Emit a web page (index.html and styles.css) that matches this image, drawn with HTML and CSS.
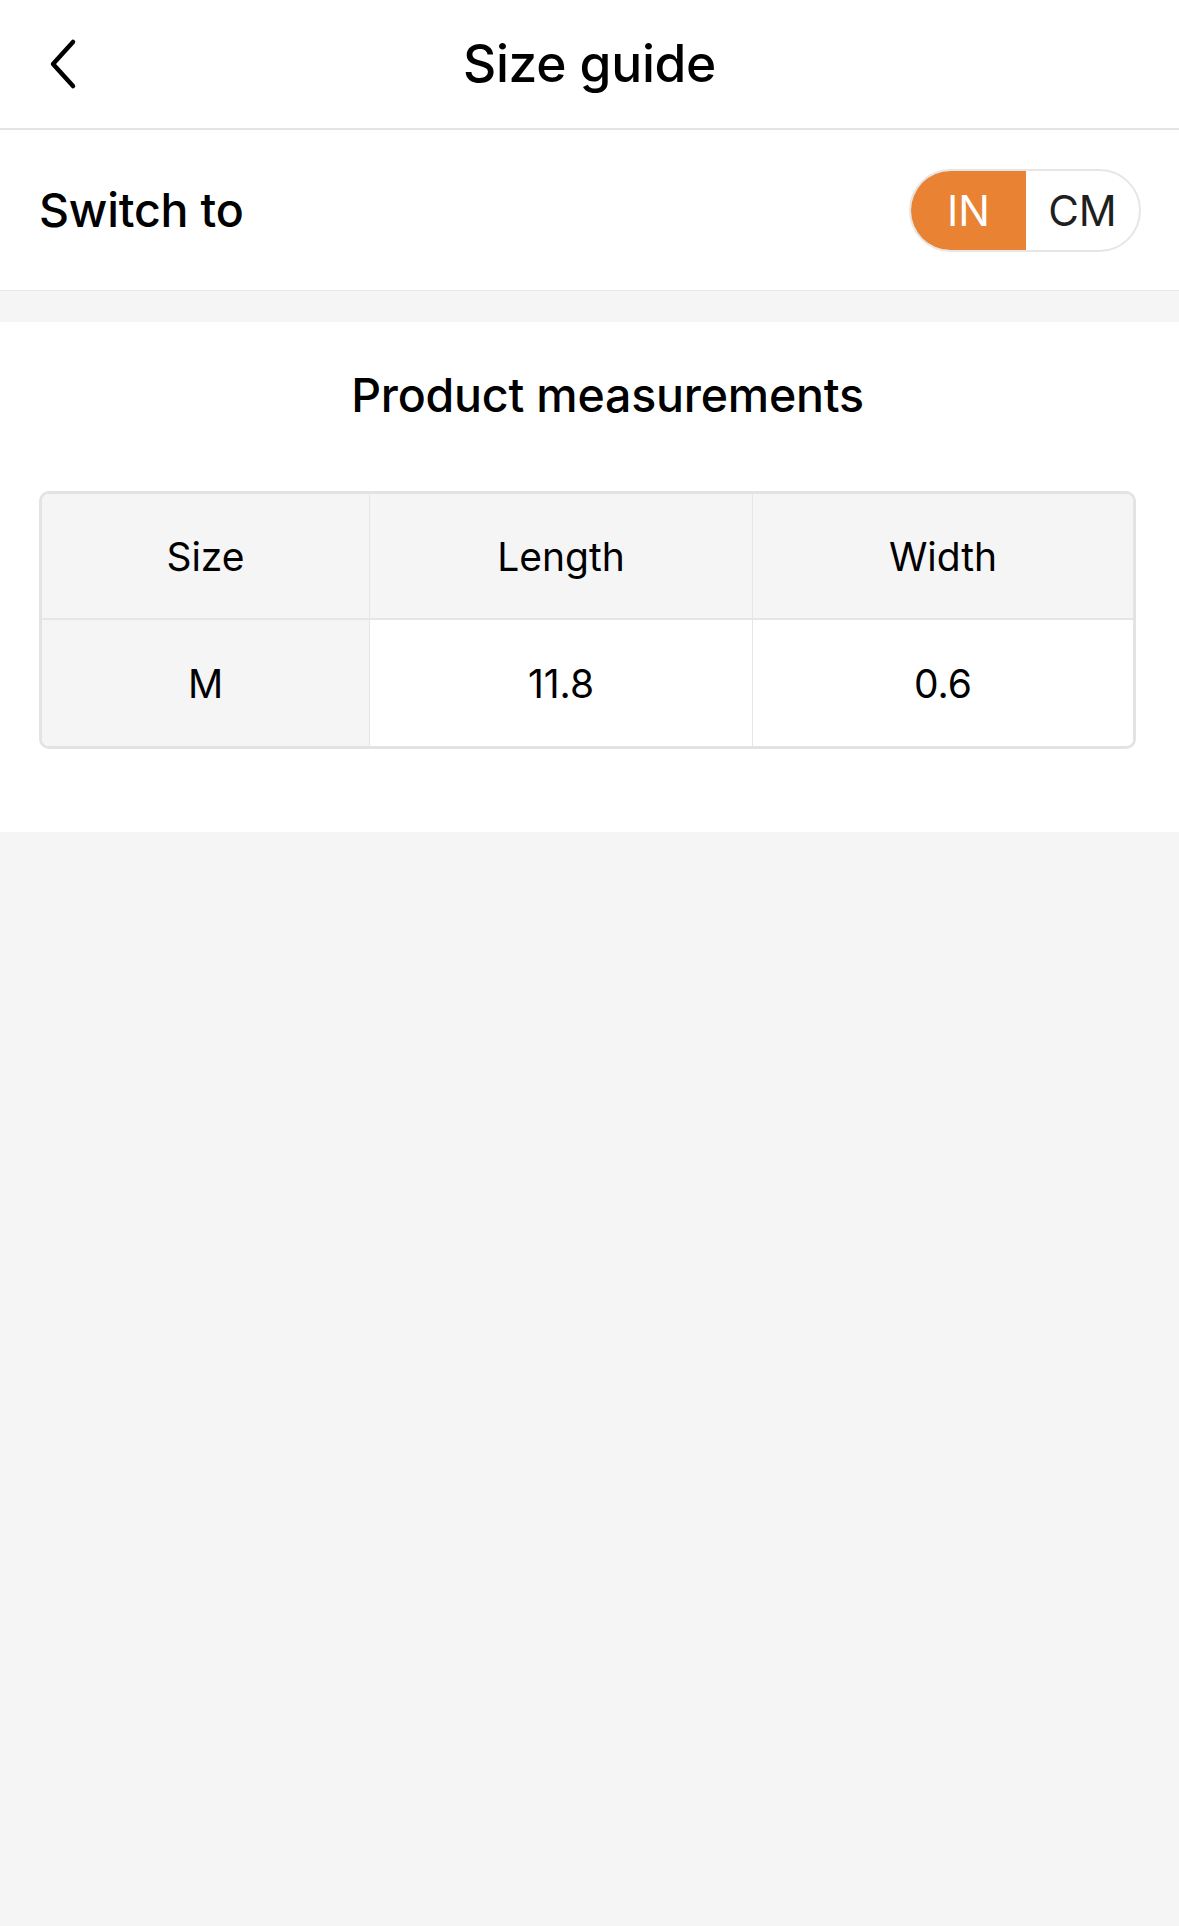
FILE: index.html
```html
<!DOCTYPE html>
<html>
<head>
<meta charset="utf-8">
<link rel="stylesheet" href="styles.css">
</head>
<body>
<div class="page">
  <header class="nav">
    <button class="back" aria-label="Back">
      <svg width="30" height="52" viewBox="0 0 30 52"><path d="M25 4 L5 26 L25 48" fill="none" stroke="#000" stroke-width="4.5" stroke-linecap="round" stroke-linejoin="round"/></svg>
    </button>
    <h1 class="nav-title">Size guide</h1>
  </header>
  <section class="switch-row">
    <span class="switch-label">Switch to</span>
    <div class="toggle">
      <span class="toggle-opt active">IN</span>
      <span class="toggle-opt">CM</span>
    </div>
  </section>
  <section class="measure">
    <h2 class="measure-title">Product measurements</h2>
    <div class="table">
      <div class="cell head first">Size</div>
      <div class="cell head">Length</div>
      <div class="cell head last">Width</div>
      <div class="cell first body-first">M</div>
      <div class="cell">11.8</div>
      <div class="cell last">0.6</div>
    </div>
  </section>
</div>
</body>
</html>
```
FILE: styles.css
```css
* { box-sizing: border-box; }
html, body { margin: 0; padding: 0; }
body {
  background: #f5f5f5;
  font-family: Inter, "Noto Sans", sans-serif;
  color: #000;
  width: 1179px;
  min-height: 1926px;
}
.nav {
  height: 130px;
  background: #fff;
  border-bottom: 2px solid #e4e4e4;
  display: flex;
  align-items: center;
  justify-content: center;
  position: relative;
}
.back {
  position: absolute;
  left: 48px;
  top: 38px;
  border: 0;
  background: none;
  padding: 0;
  width: 30px;
  height: 52px;
}
.back svg { display: block; }
.nav-title {
  margin: 0;
  font-size: 51.5px;
  font-weight: 500;
  letter-spacing: -0.3px;
  padding-bottom: 2px;
}
.switch-row {
  height: 161px;
  background: #fff;
  border-bottom: 1px solid #e8e8e8;
  display: flex;
  align-items: center;
  justify-content: space-between;
  padding: 0 38px 0 39px;
}
.switch-label {
  font-size: 46.5px;
  font-weight: 500;
  letter-spacing: -0.2px;
}
.toggle {
  display: flex;
  width: 232px;
  height: 83px;
  border: 2px solid #e6e6e6;
  border-radius: 42px;
  overflow: hidden;
}
.toggle-opt {
  flex: 1 1 50%;
  display: flex;
  align-items: center;
  justify-content: center;
  font-size: 42px;
  color: #1f1f1f;
}
.toggle-opt.active {
  background: #e98232;
  color: #fff;
  flex: 0 0 115px;
}
.measure {
  margin-top: 31px;
  background: #fff;
  padding: 48px 43px 83px 39px;
}
.measure-title {
  margin: 0 0 71px;
  text-align: center;
  font-size: 46.5px;
  font-weight: 500;
  padding-left: 40px;
  height: 50px;
  line-height: 50px;
  letter-spacing: -0.2px;
}
.table {
  display: grid;
  grid-template-columns: 328px 383px 1fr;
  grid-template-rows: 126px 126px;
  border: 3px solid #e3e3e3;
  border-radius: 10px;
  overflow: hidden;
}
.cell {
  display: flex;
  align-items: center;
  justify-content: center;
  font-size: 39px;
  border-right: 1px solid #e6e6e6;
  background: #fff;
}
.cell.last { border-right: 0; }
.cell.head {
  background: #f5f5f5;
  border-bottom: 2px solid #e6e6e6;
  font-weight: 400;
}
.cell.body-first { background: #f5f5f5; }
```
